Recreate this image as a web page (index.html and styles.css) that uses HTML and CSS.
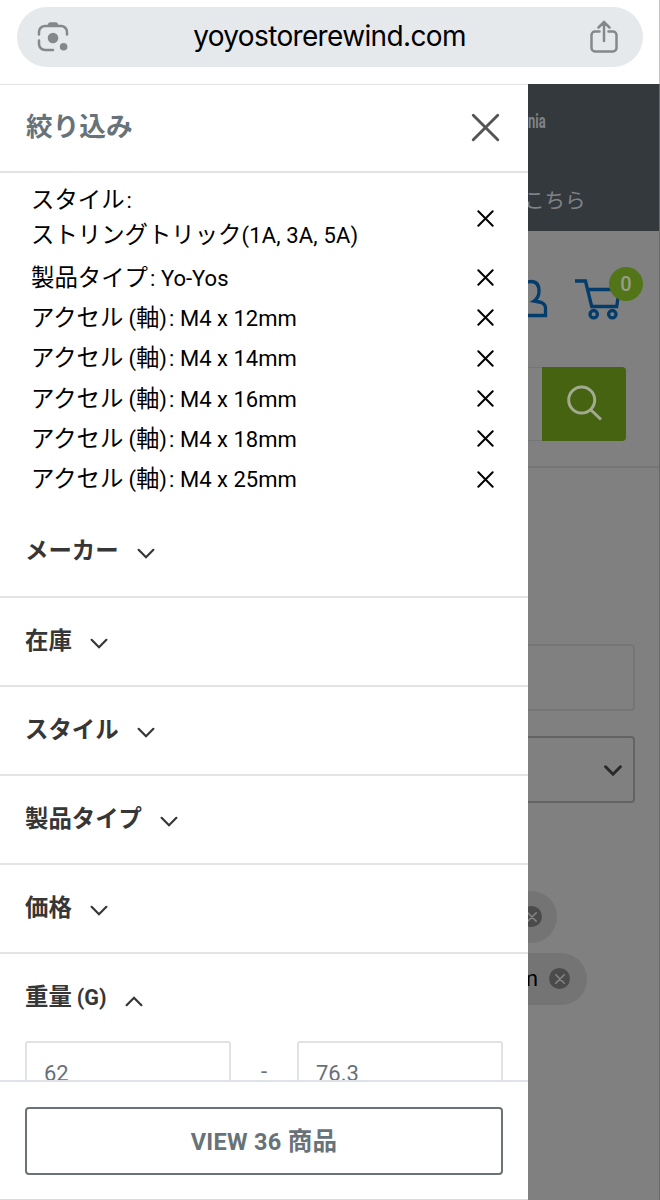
FILE: index.html
```html
<!DOCTYPE html>
<html lang="ja">
<head>
    <meta charset="UTF-8">
    <title>yoyostorerewind.com</title>
    <link rel="stylesheet" href="styles.css">
</head>
<body>
    <svg class="sprite" width="0" height="0">
        <symbol id="cross" viewBox="0 0 18 18"><path d="M1.4 1.4l15.2 15.2M16.6 1.4L1.4 16.6"/></symbol>
        <symbol id="chevron" viewBox="0 0 18 12"><path d="M1.6 1.8L9 9.2l7.4-7.4"/></symbol>
    </svg>

    <div class="browser-bar">
        <div class="address">
            <svg class="lens" width="34" height="34" viewBox="0 0 34 34">
                <path d="M3 14.500V12a6 6 0 0 1 6-6h16a6 6 0 0 1 6 6v2.500M3 20.500V24a6 6 0 0 0 6 6h8"/>
                <path class="solid" d="M11 6.500l1.300-3q.6-1.300 2-1.300h5.400q1.400 0 2 1.300l1.300 3z"/>
                <circle class="solid" cx="17" cy="18" r="5.300"/>
                <circle class="solid" cx="27.600" cy="26.700" r="3.800"/>
            </svg>
            <span class="url">yoyostorerewind.com</span>
            <svg class="share" width="30" height="34" viewBox="0 0 30 34">
                <path d="M10.500 11.500H6a3.500 3.500 0 0 0-3.500 3.500v13A3.500 3.500 0 0 0 6 31.500h18a3.500 3.500 0 0 0 3.500-3.500V15a3.500 3.500 0 0 0-3.500-3.500h-4.500M15 21V2.500M9.500 7.500L15 2l5.500 5.500"/>
            </svg>
        </div>
    </div>

    <div class="stage">
        <div class="drawer">
            <div class="drawer-header">
                <h2>絞り込み</h2>
                <svg class="close" width="29" height="29"><use href="#cross"/></svg>
            </div>

            <div class="drawer-body">
                <ul class="active-filters">
                    <li class="tall"><span>スタイル<b class="colon">:</b><br>ストリングトリック<b class="codes">(1A, 3A, 5A)</b></span><svg class="remove"><use href="#cross"/></svg></li>
                    <li><span>製品タイプ<b class="colon">:</b><b>Yo-Yos</b></span><svg class="remove"><use href="#cross"/></svg></li>
                    <li><span>アクセル<b class="paren">(</b>軸<b>)</b><b class="colon">:</b><b>M4 x 12mm</b></span><svg class="remove"><use href="#cross"/></svg></li>
                    <li><span>アクセル<b class="paren">(</b>軸<b>)</b><b class="colon">:</b><b>M4 x 14mm</b></span><svg class="remove"><use href="#cross"/></svg></li>
                    <li><span>アクセル<b class="paren">(</b>軸<b>)</b><b class="colon">:</b><b>M4 x 16mm</b></span><svg class="remove"><use href="#cross"/></svg></li>
                    <li><span>アクセル<b class="paren">(</b>軸<b>)</b><b class="colon">:</b><b>M4 x 18mm</b></span><svg class="remove"><use href="#cross"/></svg></li>
                    <li><span>アクセル<b class="paren">(</b>軸<b>)</b><b class="colon">:</b><b>M4 x 25mm</b></span><svg class="remove"><use href="#cross"/></svg></li>
                </ul>

                <div class="group"><h3>メーカー</h3><svg class="chevron"><use href="#chevron"/></svg></div>
                <div class="group"><h3>在庫</h3><svg class="chevron"><use href="#chevron"/></svg></div>
                <div class="group"><h3>スタイル</h3><svg class="chevron"><use href="#chevron"/></svg></div>
                <div class="group"><h3>製品タイプ</h3><svg class="chevron"><use href="#chevron"/></svg></div>
                <div class="group"><h3>価格</h3><svg class="chevron"><use href="#chevron"/></svg></div>
                <div class="group open"><h3>重量<span class="unit">(G)</span></h3><svg class="chevron"><use href="#chevron"/></svg></div>
                <div class="range">
                    <div class="field">62</div>
                    <span class="dash">-</span>
                    <div class="field">76.3</div>
                </div>
            </div>

            <div class="drawer-footer">
                <button class="view-button">VIEW 36 <span>商品</span></button>
            </div>
        </div>

        <div class="page">
            <div class="announcement">
                <div class="store">nia</div>
                <div class="notice">こちら</div>
            </div>
            <div class="page-header">
                <div class="account">
                    <svg class="user" width="22" height="44" viewBox="0 0 22 44">
                        <path d="M-6 16C-6 9 -3 5.500 3 5.500s8 4.500 8 9.500c0 5-2 8-5 10C13 26 17.500 27 17.500 32v7.500H-10"/>
                    </svg>
                    <svg class="cart" width="50" height="44" viewBox="0 0 50 44">
                        <path d="M0 5h10.500l6.200 25.500h25L44 15M13 13.500h31"/>
                        <circle cx="18.700" cy="38.200" r="3.700"/>
                        <circle cx="37.300" cy="38.200" r="3.700"/>
                    </svg>
                    <span class="badge">0</span>
                </div>
                <div class="search">
                    <div class="search-input"></div>
                    <div class="search-button">
                        <svg width="36" height="36" viewBox="0 0 36 36"><circle cx="14.700" cy="15" r="13"/><path d="M24 25l10 9.500"/></svg>
                    </div>
                </div>
            </div>
            <div class="listing">
                <div class="box"></div>
                <div class="box select"><svg class="chevron"><use href="#chevron"/></svg></div>
                <div class="chips">
                    <div class="chip first"><span class="dot"><svg><use href="#cross"/></svg></span></div>
                    <div class="chip">m<span class="dot"><svg><use href="#cross"/></svg></span></div>
                </div>
            </div>
        </div>
    </div>
</body>
</html>
```
FILE: styles.css
```css
* {
    box-sizing: border-box;
}

body {
    margin: 0;
    height: 1200px;
    overflow: hidden;
    background: #fff;
    color: #000;
    font-family: Roboto, "Noto Sans CJK JP", sans-serif;
}

svg {
    display: block;
    flex: none;
    fill: none;
    stroke: currentColor;
    stroke-linecap: round;
}

h2, h3, ul {
    margin: 0;
    padding: 0;
}

b {
    font-weight: 400;
}

.sprite {
    position: absolute;
}

/* browser chrome */
.browser-bar {
    height: 84px;
    padding: 7px 17px 0;
    border-right: 1px solid #c4c4c4;
}

.address {
    width: 626px;
    height: 60px;
    padding: 0 24px 0 19px;
    border-radius: 30px;
    background: #e6e9ec;
    display: flex;
    align-items: center;
    justify-content: space-between;
}

.lens, .share {
    color: #85888b;
    stroke-width: 2.5;
}

.solid {
    fill: #85888b;
    stroke: none;
}

.url {
    font-family: Inter, sans-serif;
    font-size: 28px;
    line-height: 34px;
    letter-spacing: -0.65px;
    margin-top: -2px;
}

.stage {
    height: 1116px;
    display: flex;
}

/* filter drawer */
.drawer {
    width: 528px;
    flex: none;
    display: flex;
    flex-direction: column;
    border-top: 1px solid #e1e3e4;
    border-bottom: 1px solid #d9dbdc;
}

.drawer-header {
    height: 88px;
    flex: none;
    padding: 0 28px 2px 26px;
    display: flex;
    align-items: center;
    justify-content: space-between;
    border-bottom: 2px solid #e0e2e5;
}

.drawer-header h2 {
    font-size: 26.7px;
    line-height: 40px;
    color: #677279;
}

.close {
    color: #555;
    stroke-width: 1.8;
}

.drawer-body {
    flex: 1;
    min-height: 0;
    overflow: hidden;
}

.active-filters {
    height: 335px;
    padding: 6px 34px 0 31px;
    list-style: none;
    font-size: 23.4px;
}

.active-filters li {
    height: 40.3px;
    display: flex;
    align-items: center;
    justify-content: space-between;
    line-height: 36px;
    white-space: nowrap;
}

.active-filters .tall {
    height: 78.5px;
    line-height: 35.500px;
}

.active-filters b {
    font-size: 22px;
    line-height: 1;
}

.active-filters .codes {
    letter-spacing: 0.15px;
}

.active-filters .colon {
    display: inline-block;
    width: 13px;
    padding-left: 2px;
}

.active-filters .paren {
    margin-left: 5px;
}

.remove {
    width: 17px;
    height: 17px;
    stroke-width: 2.1;
}

.group {
    height: 89px;
    padding: 0 25px 2px;
    display: flex;
    align-items: center;
    gap: 18px;
    border-bottom: 2px solid #e3e4e5;
    color: #363636;
}

.group:nth-of-type(1) {
    height: 90px;
}

.group h3 {
    font-size: 23.4px;
    line-height: 34px;
}

.unit {
    margin-left: 5px;
    font-size: 21.5px;
}

.chevron {
    width: 18px;
    height: 12px;
    margin-top: 6px;
    stroke-width: 2.2;
}

.group.open {
    height: 87px;
    border-bottom: 0;
    padding-bottom: 0;
}

.open .chevron {
    transform: rotate(180deg);
}

.range {
    padding: 0 25px;
    display: flex;
    justify-content: space-between;
    color: #677079;
    font-size: 22px;
    line-height: 62px;
}

.field {
    width: 206px;
    height: 66px;
    padding-left: 17px;
    border: 2px solid #e0e2e5;
    border-radius: 3px;
}

.drawer-footer {
    height: 119px;
    flex: none;
    padding: 25px 25px 0;
    border-top: 2px solid #dfe2e6;
}

.view-button {
    width: 478px;
    height: 68px;
    padding: 0 0 4px;
    border: 2px solid #6c7276;
    border-radius: 4px;
    background: #fff;
    color: #677279;
    font: bold 23.5px Roboto, "Noto Sans CJK JP", sans-serif;
    letter-spacing: 0.3px;
}

.view-button span {
    font-size: 24.5px;
}

/* dimmed page behind the drawer */
.page {
    flex: 1;
    overflow: hidden;
    background: #808080;
    border-right: 1px solid #686868;
}

.announcement {
    height: 147px;
    padding-top: 25px;
    background: #34393e;
    color: #808386;
}

.store {
    width: 30px;
    height: 24px;
    font-size: 20px;
    font-weight: bold;
    line-height: 24px;
    transform: scaleX(.65);
    transform-origin: left;
}

.notice {
    margin: 53px 0 0 -4px;
    font-size: 20.5px;
    line-height: 30px;
}

.page-header {
    height: 237px;
    padding-top: 45px;
    border-bottom: 2px solid #747576;
}

.account {
    position: relative;
    height: 44px;
    display: flex;
    gap: 25px;
    color: #043c6b;
    stroke-width: 3.3;
}

.account svg {
    stroke-linecap: butt;
}

.badge {
    position: absolute;
    left: 81px;
    top: -9px;
    width: 34px;
    height: 34px;
    border-radius: 50%;
    background: #527617;
    color: #989c91;
    font-size: 20px;
    font-weight: 500;
    line-height: 34px;
    text-align: center;
}

.search {
    margin-top: 47px;
    display: flex;
}

.search-input {
    width: 14px;
    height: 74px;
    border: solid #747576;
    border-width: 1px 0;
}

.search-button {
    width: 84px;
    height: 74px;
    padding: 18px 0 0 25px;
    border-radius: 0 4px 4px 0;
    background: #466311;
    color: #a2ab91;
    stroke-width: 3;
}

.search-button svg {
    stroke-linecap: butt;
}

.listing {
    padding-top: 176px;
}

.box {
    width: 107px;
    height: 67px;
    margin-bottom: 25px;
    border: 2px solid #747576;
    border-left: 0;
    border-radius: 0 4px 4px 0;
}

.select {
    padding: 21px 0 0 76px;
    border-color: #626364;
    color: #292929;
}

.select .chevron {
    stroke-width: 3;
}

.chips {
    padding-top: 63px;
}

.chip {
    width: 59px;
    height: 52px;
    margin-bottom: 10px;
    padding: 0 17px 1px 0;
    border-radius: 0 26px 26px 0;
    background: #747474;
    display: flex;
    align-items: center;
    justify-content: flex-end;
    gap: 11px;
    font-size: 22px;
}

.first {
    width: 29px;
    padding-right: 15px;
}

.dot {
    width: 21px;
    height: 21px;
    flex: none;
    border-radius: 50%;
    background: #4b4b4b;
    color: #858585;
    display: flex;
    align-items: center;
    justify-content: center;
}

.dot svg {
    width: 10px;
    height: 10px;
    stroke-width: 2.8;
}
```
